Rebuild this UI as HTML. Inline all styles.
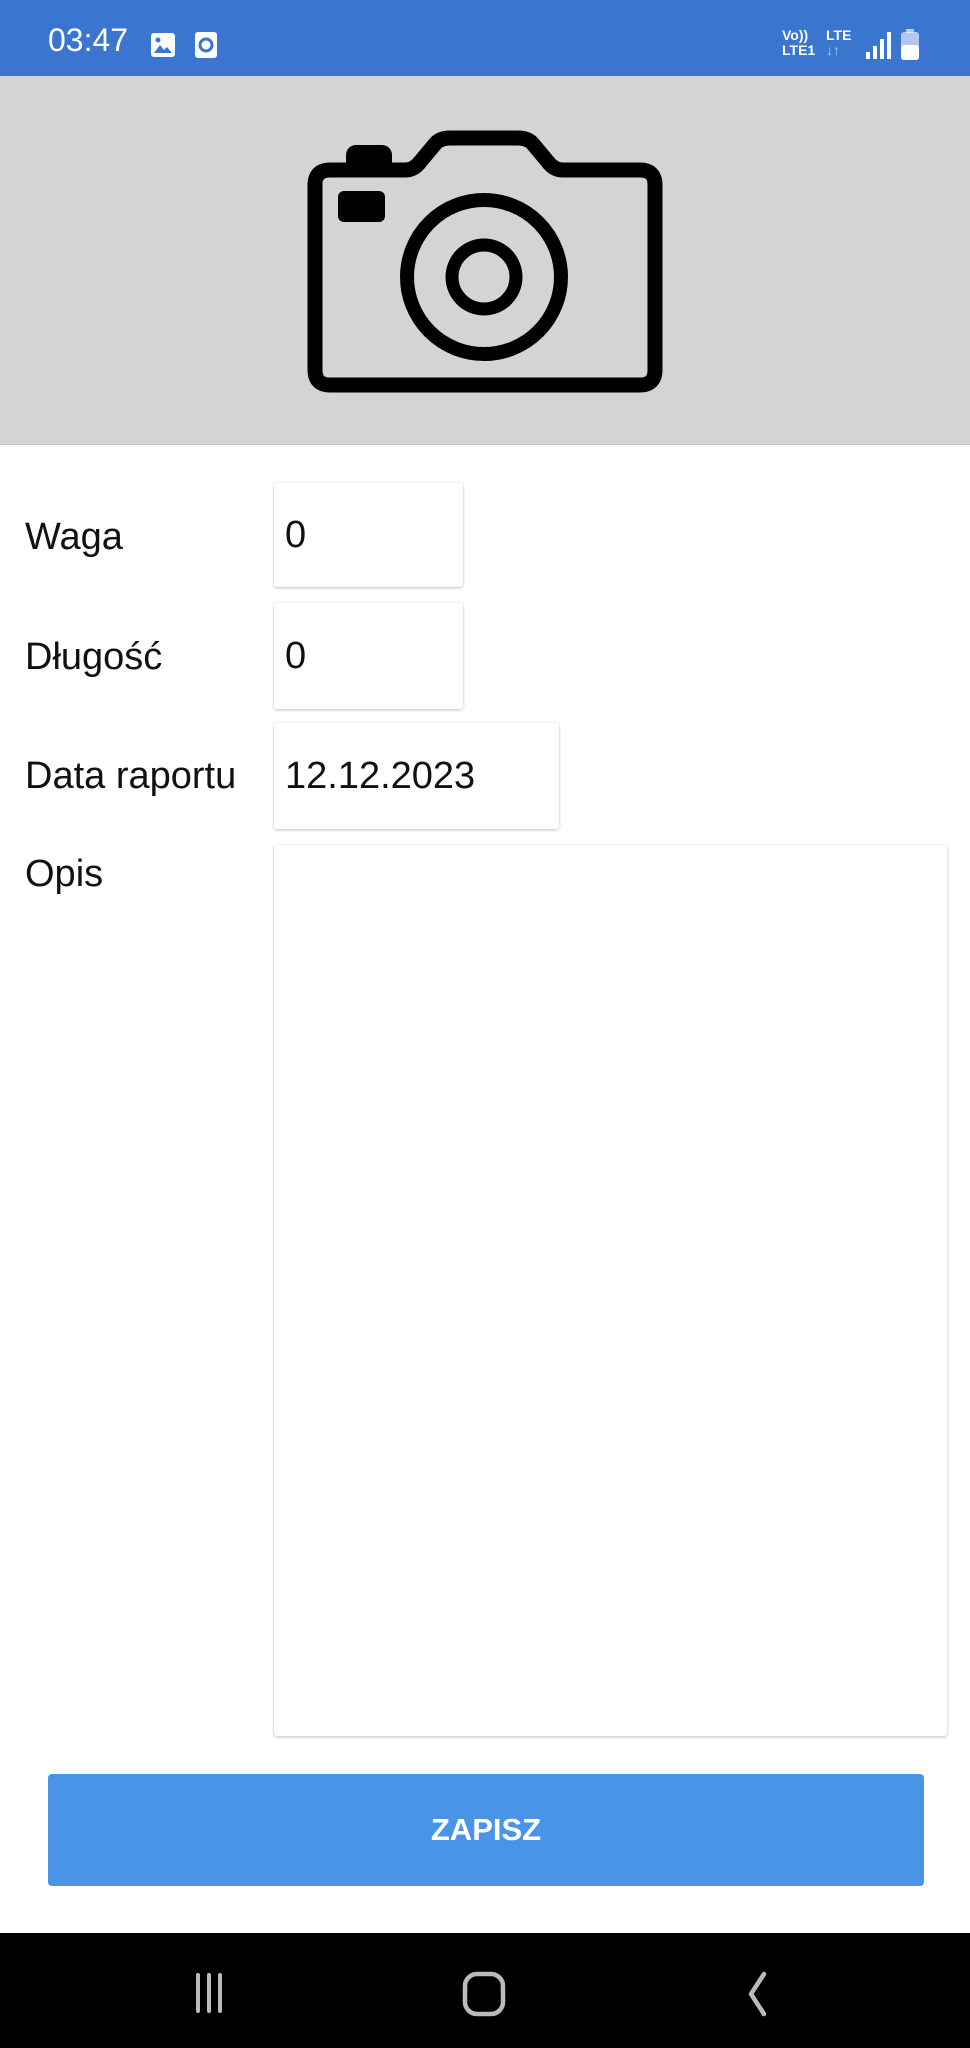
<!DOCTYPE html>
<html><head><meta charset="utf-8"><style>
html,body{margin:0;padding:0;width:970px;height:2048px;overflow:hidden;background:#fff;font-family:"Liberation Sans",sans-serif;position:relative}
.abs{position:absolute}
.sb{left:0;top:0;width:970px;height:76px;background:#3a76d0}
.gray{left:0;top:76px;width:970px;height:368px;background:#d4d4d4;border-bottom:1px solid #c8c8c8}
.lbl{left:25px;font-size:38px;color:#111}
.box{background:#fff;border-radius:3px;box-shadow:0 1px 3px rgba(0,0,0,.25),0 0 1px rgba(0,0,0,.08);font-size:38px;color:#111;box-sizing:border-box;padding-left:11px}
.btn{left:48px;top:1774px;width:876px;height:112px;background:#4a94e8;border-radius:4px;color:#fff;font-size:31px;font-weight:bold;text-align:center;line-height:112px}
.nav{left:0;top:1933px;width:970px;height:115px;background:#000}
</style></head><body>
<div class="abs sb">
  <div class="abs" style="left:48px;top:22px;color:#fff;font-size:32px">03:47</div>
  <svg class="abs" style="left:150px;top:32px" width="26" height="26" viewBox="0 0 26 26"><rect x="1" y="1" width="24" height="24" rx="3" fill="#fff"/><path d="M4 21l6-8 4 5 3-3 5 6z" fill="#3a76d0"/><circle cx="8" cy="8" r="2.5" fill="#3a76d0"/></svg>
  <svg class="abs" style="left:194px;top:31px" width="24" height="28" viewBox="0 0 24 28"><rect x="1" y="1" width="22" height="26" rx="3" fill="#fff"/><circle cx="12" cy="14" r="6" fill="none" stroke="#3a76d0" stroke-width="3"/></svg>
  <div class="abs" style="left:782px;top:28px;color:#fff;font-size:14px;font-weight:bold;line-height:15px">Vo))<br>LTE1</div>
  <div class="abs" style="left:826px;top:28px;color:#fff;font-size:14px;font-weight:bold;line-height:15px">LTE<br><span style="opacity:.6">↓↑</span></div>
  <svg class="abs" style="left:864px;top:30px" width="28" height="30" viewBox="0 0 28 30"><rect x="2" y="22" width="4" height="7" fill="#fff"/><rect x="9" y="16" width="4" height="13" fill="#fff"/><rect x="16" y="9" width="4" height="20" fill="#fff"/><rect x="23" y="2" width="4" height="27" fill="#fff"/></svg>
  <svg class="abs" style="left:900px;top:29px" width="20" height="32" viewBox="0 0 20 32"><rect x="6" y="0" width="8" height="4" fill="#fff" opacity=".6"/><rect x="1" y="3" width="18" height="28" rx="3" fill="#fff" opacity=".6"/><rect x="1" y="16" width="18" height="15" rx="3" fill="#fff"/></svg>
</div>
<div class="abs gray">
  <svg class="abs" style="left:300px;top:50px" width="370" height="280" viewBox="300 126 370 280">
    <path d="M330 170 H405 Q414 170 420 162 L435 144 Q440 138 450 138 H518 Q528 138 533 144 L548 162 Q554 170 563 170 H640 Q655 170 655 185 V370 Q655 385 640 385 H330 Q315 385 315 370 V185 Q315 170 330 170 Z" fill="none" stroke="#000" stroke-width="15" stroke-linejoin="round"/>
    <rect x="346" y="145" width="46" height="30" rx="10" fill="#000"/>
    <rect x="338" y="191" width="47" height="31" rx="6" fill="#000"/>
    <circle cx="484" cy="277" r="77" fill="none" stroke="#000" stroke-width="14"/>
    <circle cx="484" cy="277" r="32" fill="none" stroke="#000" stroke-width="13"/>
  </svg>
</div>
<div class="abs lbl" style="top:516px">Waga</div>
<div class="abs box" style="left:274px;top:483px;width:189px;height:104px;line-height:104px">0</div>
<div class="abs lbl" style="top:636px">Długość</div>
<div class="abs box" style="left:274px;top:603px;width:189px;height:106px;line-height:106px">0</div>
<div class="abs lbl" style="top:755px">Data raportu</div>
<div class="abs box" style="left:274px;top:723px;width:285px;height:106px;line-height:106px">12.12.2023</div>
<div class="abs lbl" style="top:853px">Opis</div>
<div class="abs box" style="left:274px;top:845px;width:673px;height:891px"></div>
<div class="abs btn">ZAPISZ</div>
<div class="abs nav">
  <svg class="abs" style="left:195px;top:40px" width="40" height="40" viewBox="0 0 40 40"><path d="M3 2V38M14 2V38M25 2V38" stroke="#bbb" stroke-width="4" stroke-linecap="round"/></svg>
  <svg class="abs" style="left:462px;top:38px" width="44" height="46" viewBox="0 0 44 46"><rect x="3" y="3" width="38" height="40" rx="12" fill="none" stroke="#bbb" stroke-width="4.5"/></svg>
  <svg class="abs" style="left:742px;top:38px" width="30" height="46" viewBox="0 0 30 46"><path d="M22 3L9 23L22 43" fill="none" stroke="#bbb" stroke-width="4.5" stroke-linecap="round" stroke-linejoin="round"/></svg>
</div>
</body></html>
